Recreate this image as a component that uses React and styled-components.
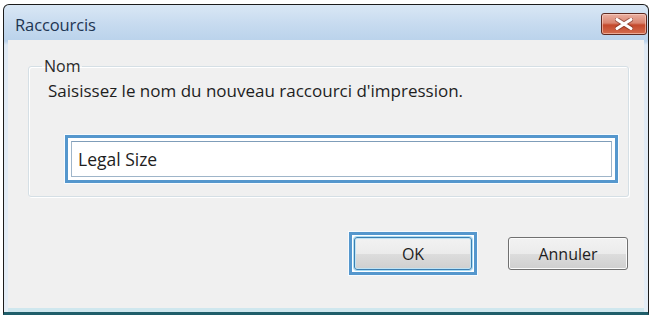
import React from 'react';
import styled, { createGlobalStyle } from 'styled-components';

const GlobalStyle = createGlobalStyle`
  html, body {
    margin: 0;
    padding: 0;
    background: #ffffff;
  }
  body {
    font-family: "Open Sans", "Liberation Sans", Arial, sans-serif;
  }
`;

function CloseIcon() {
    return (
        <svg width="18" height="12" viewBox="0 0 18 12">
            <path d="M2 1.5 L16 10.5 M16 1.5 L2 10.5" stroke="#6b2c22" strokeWidth="5" strokeLinecap="round" opacity="0.55" />
            <path d="M2 1.5 L16 10.5 M16 1.5 L2 10.5" stroke="#ffffff" strokeWidth="3" strokeLinecap="round" />
        </svg>
    );
}

export default function App() {
    return (
        <>
            <GlobalStyle />
            <Window>
                <TitleBar>
                    <Title>Raccourcis</Title>
                    <CloseButton aria-label="Fermer">
                        <CloseIcon />
                    </CloseButton>
                </TitleBar>
                <Client>
                    <Group>
                        <Legend>Nom</Legend>
                        <Prompt>Saisissez le nom du nouveau raccourci d'impression.</Prompt>
                        <Highlight $inset={6}>
                            <TextBox defaultValue="Legal Size" />
                        </Highlight>
                    </Group>
                    <ButtonRow>
                        <Highlight $inset={5}>
                            <Button $default>OK</Button>
                        </Highlight>
                        <Button>Annuler</Button>
                    </ButtonRow>
                </Client>
            </Window>
        </>
    );
}

const Window = styled.div`
  margin: 4px 0 0 3px;
  width: 646px;
  height: 311px;
  box-sizing: border-box;
  border: 1px solid #1c1c1c;
  border-bottom: 3px solid #1f5e6a;
  border-radius: 6px 6px 0 0;
  background: linear-gradient(to bottom, #d9e7f5 0px, #c6daef 20px, #bad2eb 36px, #dfe9f4 40px, #e4edf6 100%);
  display: flex;
  flex-direction: column;
  overflow: hidden;
`;

const TitleBar = styled.div`
  height: 35px;
  flex: none;
  display: flex;
  align-items: center;
  justify-content: space-between;
  padding: 3px 1px 0 11px;
  box-sizing: border-box;
`;

const Title = styled.span`
  font-size: 16.5px;
  color: #1e3553;
  letter-spacing: -0.1px;
`;

const CloseButton = styled.button`
  width: 46px;
  height: 22px;
  padding: 0;
  border: 1px solid #5e2a21;
  border-radius: 3px;
  background: linear-gradient(to bottom, #eab0a2 0%, #d98570 45%, #c4492c 55%, #d46d4f 100%);
  box-shadow: inset 0 0 0 1px rgba(255, 220, 210, 0.55);
  display: flex;
  align-items: center;
  justify-content: center;
`;

const Client = styled.div`
  flex: 1;
  margin: 0 4px;
  background: #f0f0f0;
  border-bottom: 4px solid #cfe7ee;
  padding: 17px 15px 0 20px;
  display: flex;
  flex-direction: column;
`;

const Group = styled.fieldset`
  margin: 0;
  padding: 0 10px 13px 19px;
  border: 1px solid #d5dfe5;
  border-radius: 3px;
  box-shadow: inset 1px 1px 0 #ffffff, 1px 1px 0 #ffffff;
`;

const Legend = styled.legend`
  margin-left: -6px;
  padding: 0 2px;
  font-size: 16px;
  line-height: 18px;
  color: #2a2a2a;
`;

const Prompt = styled.div`
  margin-top: 7px;
  font-size: 17px;
  line-height: 18px;
  color: #1e1e1e;
`;

const Highlight = styled.div`
  display: flex;
  padding: ${(p) => p.$inset - 3}px;
  border: 3px solid #5597cd;
  background: #ffffff;
  box-shadow: 0 0 0 1px #f7fbfe;
  ${Group} & {
    margin: 35px 0 0 17px;
  }
`;

const TextBox = styled.input`
  flex: 1;
  height: 36px;
  box-sizing: border-box;
  border: 1px solid #9fb5c9;
  border-top-color: #7f9db9;
  padding: 0 6px;
  font-family: inherit;
  font-size: 17.5px;
  color: #1e1e1e;
  background: #ffffff;
  outline: none;
`;

const ButtonRow = styled.div`
  margin-top: 35px;
  margin-right: 1px;
  display: flex;
  align-items: center;
  justify-content: flex-end;
  gap: 31px;
`;

const Button = styled.button`
  width: ${(p) => (p.$default ? 118 : 120)}px;
  height: 33px;
  box-sizing: border-box;
  border-radius: 3px;
  border: 1px solid ${(p) => (p.$default ? '#3c7fb1' : '#707070')};
  box-shadow: ${(p) => (p.$default ? '0 0 0 1px #a9dcf5, inset 0 0 0 1px #bfe3f5' : 'inset 0 0 0 1px #fbfbfb')};
  background: linear-gradient(to bottom, #f2f2f2 0%, #ebebeb 50%, #dddddd 51%, #cfcfcf 100%);
  font-family: inherit;
  font-size: 16px;
  color: #1e1e1e;
  padding: 0;
`;
